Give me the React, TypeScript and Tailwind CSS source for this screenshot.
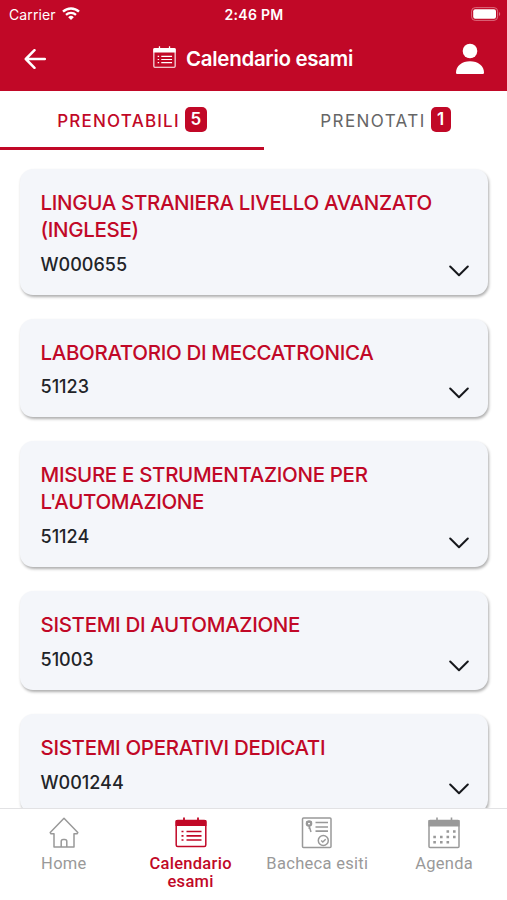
import clsx from 'clsx';

const exams = [
  { title: ['LINGUA STRANIERA LIVELLO AVANZATO', '(INGLESE)'], code: 'W000655' },
  { title: ['LABORATORIO DI MECCATRONICA'], code: '51123' },
  { title: ['MISURE E STRUMENTAZIONE PER', "L'AUTOMAZIONE"], code: '51124' },
  { title: ['SISTEMI DI AUTOMAZIONE'], code: '51003' },
  { title: ['SISTEMI OPERATIVI DEDICATI'], code: 'W001244' },
];

function CalendarListIcon({ className }: { className?: string }) {
  return (
    <svg viewBox="0 0 32 32" className={className} fill="none" stroke="currentColor">
      <rect x="1.2" y="3.5" width="29.6" height="26" rx="1.5" strokeWidth="1.5" />
      <path d="M.5 4a1 1 0 0 1 1-1h29a1 1 0 0 1 1 1v5H.5z" fill="currentColor" stroke="none" />
      <path d="M9 .5v3M23 .5v3" strokeWidth="1.8" />
      <path d="M11.500 14.500h15M11.500 18.800h15M11.500 23h15" strokeWidth="1.700" />
      <path d="M6.500 14.500h2M6.500 18.800h2M6.500 23h2" strokeWidth="1.700" />
    </svg>
  );
}

function HomeIcon({ className }: { className?: string }) {
  return (
    <svg viewBox="0 0 32 32" className={className} fill="none" stroke="currentColor">
      <path
        d="M16 1.200 2.200 15.500l.8 1.300h3V30h20V16.800h3l.8-1.300z"
        strokeWidth="1.500"
        strokeLinejoin="round"
      />
      <path d="M13.200 30v-5.500a2 2 0 0 1 2-2h1.600a2 2 0 0 1 2 2V30" strokeWidth="1.500" />
    </svg>
  );
}

function ResultsIcon({ className }: { className?: string }) {
  return (
    <svg viewBox="0 0 32 32" className={className} fill="none" stroke="currentColor">
      <rect x="1.500" y="1" width="28.500" height="29.500" rx="1" strokeWidth="1.500" />
      <circle cx="8" cy="6.500" r="2.200" strokeWidth="2.200" />
      <path d="M5 5h6M8 8.500l2 6.500M8.300 8v4" strokeWidth="1.500" />
      <path d="M14.500 5.500h12.500M14.500 10h12.500M14.500 14.200h12.500" strokeWidth="1.700" />
      <circle cx="22.300" cy="23.500" r="5" strokeWidth="1.500" />
      <path d="m20.200 23.500 1.600 1.500 2.900-2.800" strokeWidth="1.500" />
    </svg>
  );
}

function AgendaIcon({ className }: { className?: string }) {
  return (
    <svg viewBox="0 0 32 32" className={className} fill="none" stroke="currentColor">
      <rect x="1" y="3.500" width="30" height="27" rx="1" strokeWidth="1.500" />
      <path d="M.5 3h31v6.500H.5z" fill="currentColor" stroke="none" />
      <path d="M9 .5v3M23.500 .5v3" strokeWidth="1.600" />
      <path
        d="M18.500 14.500h2.600M25 14.500h2.600M5.300 20h2.600M12 20h2.600M18.500 20h2.600M25 20h2.600M5.300 25.300h2.600M12 25.300h2.600M18.500 25.300h2.600"
        strokeWidth="2.600"
      />
    </svg>
  );
}

const navItems = [
  { label: 'Home', Icon: HomeIcon },
  { label: 'Calendario esami', Icon: CalendarListIcon, active: true },
  { label: 'Bacheca esiti', Icon: ResultsIcon },
  { label: 'Agenda', Icon: AgendaIcon },
];

function StatusBar() {
  return (
    <div className="grid grid-cols-3 items-center h-7 pl-[9px] pr-[6px]">
      <div className="flex items-center gap-[6px] text-[14px] tracking-[0.100px]">
        Carrier
        <svg viewBox="0 0 18 13" className="w-[18px] h-[13px] mb-[1px]" fill="none" stroke="currentColor">
          <path d="M1 4.700a11.500 11.500 0 0 1 16 0" strokeWidth="2.400" />
          <path d="M4 7.900a7.200 7.200 0 0 1 10 0" strokeWidth="2.200" />
          <path d="M9 13 6.200 10.200a4 4 0 0 1 5.600 0z" fill="currentColor" stroke="none" />
        </svg>
      </div>
      <div className="text-center text-[14px] font-semibold tracking-[0.300px] pr-[2px] whitespace-nowrap">2:46 PM</div>
      <svg viewBox="0 0 30 14" className="w-[30px] h-[14px] justify-self-end mt-[-1px]">
        <rect x=".6" y=".6" width="26" height="12.800" rx="3.600" fill="none" stroke="#dc6b7d" strokeWidth="1" />
        <rect x="2.200" y="2.200" width="22.800" height="9.600" rx="2" fill="white" />
        <path d="M28 5v4c1.600-.6 1.600-3.400 0-4z" fill="#dc6b7d" />
      </svg>
    </div>
  );
}

function Header() {
  return (
    <header className="h-[91px] shrink-0 bg-[#c10827] text-white">
      <StatusBar />
      <div className="flex items-center justify-between h-[61px] pl-6 pr-[22px]">
        <svg viewBox="0 0 22 20" className="w-[22px] h-5" fill="none" stroke="currentColor" strokeWidth="2.500">
          <path d="M10.500 1.200 1.800 10l8.700 8.800M2 10h18.800" strokeLinecap="round" strokeLinejoin="round" />
        </svg>
        <div className="flex items-center gap-[10px] pl-[5px]">
          <CalendarListIcon className="w-[23px] h-[23px] mb-[2px]" />
          <h1 className="pt-[1px] text-[20.500px] font-semibold tracking-[-0.300px]">Calendario esami</h1>
        </div>
        <svg viewBox="0 0 30 32" className="w-[30px] h-8" fill="currentColor">
          <circle cx="15" cy="8" r="7.300" />
          <path d="M1 29.500C1 23 7 18.200 15 18.200S29 23 29 29.500c0 1-.6 1.500-1.500 1.500h-25C1.600 31 1 30.500 1 29.500z" />
        </svg>
      </div>
    </header>
  );
}

function Tabs() {
  return (
    <div className="flex h-[59px] shrink-0 text-[17px]">
      <button className="flex items-center justify-center gap-[5px] w-[264px] border-b-[3px] border-[#c10827] text-[#c10827]">
        <span className="pt-[5px] tracking-[1.200px] font-medium">PRENOTABILI</span>
        <span className="flex items-center justify-center w-[22px] h-[25px] pt-[1px] rounded-[5px] bg-[#c10827] text-white font-semibold">
          5
        </span>
      </button>
      <button className="flex flex-1 items-center justify-center gap-[5px] border-b-[3px] border-transparent text-[#666]">
        <span className="pt-[5px] tracking-[1.400px]">PRENOTATI</span>
        <span className="flex items-center justify-center w-5 h-[25px] pt-[1px] rounded-[5px] bg-[#c10827] text-white font-semibold">
          1
        </span>
      </button>
    </div>
  );
}

export default function App() {
  return (
    <div className="flex flex-col w-[507px] h-[900px] overflow-hidden bg-white font-[Inter,sans-serif]">
      <Header />
      <Tabs />
      <main className="flex flex-col flex-1 gap-6 min-h-0 overflow-hidden pt-[19px] pl-5 pr-[19px]">
        {exams.map((exam) => (
          <article
            key={exam.code}
            className="flex shrink-0 justify-between rounded-[13px] bg-[#f4f6fa] pt-[21px] pb-[17px] pl-[20.500px] pr-[19.500px] shadow-[1px_2px_3px_0px_rgba(0,0,0,0.32)]"
          >
            <div>
              <h2 className="text-[20.500px] font-medium leading-[26.800px] tracking-[-0.330px] text-[#c10827]">
                {exam.title.map((line) => (
                  <span key={line} className="block whitespace-nowrap">
                    {line}
                  </span>
                ))}
              </h2>
              <p className="mt-2 text-[18px] font-medium leading-[26px] text-[#222428]">{exam.code}</p>
            </div>
            <svg
              viewBox="0 0 20 12"
              className="w-5 h-3 self-end mb-[1px]"
              fill="none"
              stroke="#16181c"
              strokeWidth="2"
            >
              <path d="m1.200 1.500 8.800 8.700 8.800-8.700" strokeLinecap="round" strokeLinejoin="round" />
            </svg>
          </article>
        ))}
      </main>
      <nav className="grid grid-cols-4 h-[92px] shrink-0 border-t border-[#e2e2e4] bg-white font-[Roboto,sans-serif] text-[16.500px] leading-[18px] tracking-[0.300px]">
        {navItems.map(({ label, Icon, active }) => (
          <a
            key={label}
            className={clsx(
              'flex flex-col items-center gap-[6px] pt-2 pl-[9px] pr-2 text-center',
              active ? 'text-[#c10827] font-medium' : 'text-[#999]'
            )}
          >
            <Icon className="w-8 h-8" />
            {label}
          </a>
        ))}
      </nav>
    </div>
  );
}
